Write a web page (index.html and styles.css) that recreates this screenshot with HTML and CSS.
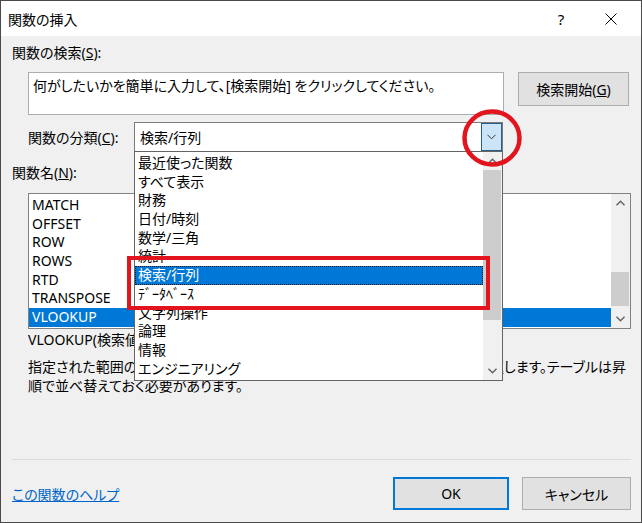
FILE: index.html
```html
<!DOCTYPE html>
<html>
<head>
  <meta charset="UTF-8">
  <title>関数の挿入</title>
  <link rel="stylesheet" href="styles.css">
</head>
<body>
  <div class="window">
    <div class="titlebar">
      <span class="title">関数の挿入</span>
      <span class="help-btn">?</span>
      <span class="close-btn">
        <svg width="12" height="12" viewBox="0 0 12 12"><path d="M0.5 0.5 L11.5 11.5 M11.5 0.5 L0.5 11.5" stroke="#000" stroke-width="1"/></svg>
      </span>
    </div>

    <div class="content">
      <p class="label">関数の検索(<u>S</u>):</p>
      <div class="search-row">
        <div class="search-box">何がしたいかを簡単に入力して、[検索開始] をクリックしてください。</div>
        <button class="btn search-btn">検索開始(<u>G</u>)</button>
      </div>

      <div class="category-row">
        <span class="category-label">関数の分類(<u>C</u>):</span>
        <div class="combo">
          <span>検索/行列</span>
          <span class="combo-arrow">
            <svg width="9" height="6" viewBox="0 0 9 6"><path d="M0.5 0.8 L4.5 4.8 L8.5 0.8" fill="none" stroke="#333" stroke-width="1"/></svg>
          </span>
        </div>
      </div>

      <p class="label name-label">関数名(<u>N</u>):</p>
      <div class="func-list">
        <ul class="items">
          <li>MATCH</li>
          <li>OFFSET</li>
          <li>ROW</li>
          <li>ROWS</li>
          <li>RTD</li>
          <li>TRANSPOSE</li>
          <li class="selected">VLOOKUP</li>
        </ul>
        <div class="scrollbar">
          <svg class="arrow" width="9" height="6" viewBox="0 0 9 6"><path d="M0.5 5.2 L4.5 1.2 L8.5 5.2" fill="none" stroke="#606060" stroke-width="1.4"/></svg>
          <div class="track list-track"><div class="thumb"></div></div>
          <svg class="arrow" width="9" height="6" viewBox="0 0 9 6"><path d="M0.5 0.8 L4.5 4.8 L8.5 0.8" fill="none" stroke="#606060" stroke-width="1.4"/></svg>
        </div>
      </div>

      <p class="syntax">VLOOKUP(検索値,範囲,列番号,検索方法)</p>
      <div class="desc">
        <div class="desc-line">
          <span class="desc-head">指定された範囲の 1 列目で特定の値を検索し、指定した列と同じ行にある値を</span>
          <span>返します。テーブルは昇</span>
        </div>
        <div>順で並べ替えておく必要があります。</div>
      </div>

      <div class="spacer"></div>
      <div class="separator"></div>
      <div class="footer">
        <a href="#" class="help-link">この関数のヘルプ</a>
        <button class="btn ok-btn">OK</button>
        <button class="btn cancel-btn">キャンセル</button>
      </div>
    </div>

    <!-- ドロップダウン（開いた状態） -->
    <div class="dropdown">
      <ul class="items">
        <li>最近使った関数</li>
        <li>すべて表示</li>
        <li>財務</li>
        <li>日付/時刻</li>
        <li>数学/三角</li>
        <li>統計</li>
        <li class="selected">検索/行列</li>
        <li>ﾃﾞｰﾀﾍﾞｰｽ</li>
        <li>文字列操作</li>
        <li>論理</li>
        <li>情報</li>
        <li>エンジニアリング</li>
      </ul>
      <div class="scrollbar">
        <svg class="arrow" width="9" height="6" viewBox="0 0 9 6"><path d="M0.5 5.2 L4.5 1.2 L8.5 5.2" fill="none" stroke="#606060" stroke-width="1.4"/></svg>
        <div class="track drop-track"><div class="thumb"></div></div>
        <svg class="arrow" width="9" height="6" viewBox="0 0 9 6"><path d="M0.5 0.8 L4.5 4.8 L8.5 0.8" fill="none" stroke="#606060" stroke-width="1.4"/></svg>
      </div>
    </div>

    <!-- 注釈（赤丸・赤枠） -->
    <svg class="marks" width="642" height="523" viewBox="0 0 642 523">
      <ellipse cx="492" cy="138" rx="27.5" ry="26.5" fill="none" stroke="#e2151f" stroke-width="4.5"/>
      <rect x="129" y="258" width="359" height="50" fill="none" stroke="#e2151f" stroke-width="4"/>
    </svg>
  </div>
</body>
</html>
```

FILE: styles.css
```css
html, body {
  margin: 0;
  padding: 0;
}

body {
  font-family: "Noto Sans", "Noto Sans CJK JP", sans-serif;
  font-feature-settings: "palt";
  font-size: 14px;
  color: #000;
  background-color: #f0f0f0;
}

.window {
  position: relative;
  width: 642px;
  height: 523px;
  box-sizing: border-box;
  border: 1px solid #4a4a4a;
  background-color: #f0f0f0;
  display: flex;
  flex-direction: column;
  overflow: hidden;
}

.titlebar {
  height: 35px;
  background-color: #fff;
  display: flex;
  align-items: center;
  padding-left: 7px;
}

.title {
  flex: 1;
}

.help-btn {
  width: 46px;
  text-align: center;
  font-size: 15px;
  margin-right: 4px;
}

.close-btn {
  width: 46px;
  margin-right: 7px;
  display: flex;
  justify-content: center;
}

.content {
  flex: 1;
  display: flex;
  flex-direction: column;
  padding: 0 10px 0 11px;
}

.label {
  margin: 7px 0 0 0;
  line-height: 20px;
}

.search-row {
  display: flex;
  align-items: flex-start;
  margin-top: 9px;
}

.search-box {
  margin-left: 16px;
  width: 476px;
  height: 43px;
  box-sizing: border-box;
  border: 1px solid #adadad;
  background-color: #fff;
  padding: 3px 4px;
  line-height: 20px;
}

.btn {
  font-family: inherit;
  font-feature-settings: "palt";
  font-size: 14px;
  color: #000;
  background-color: #e1e1e1;
  border: 1px solid #adadad;
  padding: 0;
  box-sizing: border-box;
}

.search-btn {
  margin-left: 14px;
  width: 111px;
  height: 34px;
}

.category-row {
  display: flex;
  align-items: center;
  margin-top: 7px;
  margin-left: 16px;
}

.category-label {
  width: 106px;
}

.combo {
  width: 369px;
  height: 30px;
  box-sizing: border-box;
  border: 1px solid #7a7a7a;
  background-color: #fff;
  display: flex;
  align-items: center;
  padding-left: 5px;
}

.combo span:first-child {
  flex: 1;
}

.combo-arrow {
  width: 21px;
  height: 28px;
  box-sizing: border-box;
  border: 1px solid #2a5f8c;
  background-color: #cce4f7;
  display: flex;
  align-items: center;
  justify-content: center;
}

.name-label {
  margin-top: 11px;
}

.func-list {
  margin: 10px 0 0 16px;
  width: 603px;
  height: 136px;
  box-sizing: border-box;
  border: 1px solid #828282;
  background-color: #fff;
  display: flex;
}

.items {
  list-style: none;
  margin: 0;
  padding: 2px 0 0 0;
  flex: 1;
}

.items li {
  line-height: 18.7px;
  height: 18.7px;
  padding-left: 3px;
}

.items li.selected {
  background-color: #0078d7;
  color: #fff;
}

.scrollbar {
  width: 19px;
  background-color: #f0f0f0;
  display: flex;
  flex-direction: column;
  align-items: center;
}

.scrollbar .arrow {
  margin: 6px 0;
}

.track {
  flex: 1;
  width: 100%;
  position: relative;
}

.thumb {
  position: absolute;
  left: 0;
  right: 1px;
  background-color: #cdcdcd;
}

.list-track .thumb {
  top: 60px;
  height: 34px;
}

.syntax {
  margin: 1px 0 0 16px;
  line-height: 20px;
}

.desc {
  margin: 7px 0 0 16px;
  line-height: 19px;
}

.desc-line {
  display: flex;
  padding-right: 5px;
}

.desc-head {
  flex: 1;
  min-width: 0;
  overflow: hidden;
  white-space: nowrap;
}

.spacer {
  flex: 1;
}

.separator {
  height: 1px;
  background-color: #dcdcdc;
}

.footer {
  display: flex;
  align-items: center;
  margin-top: 17px;
  margin-bottom: 12px;
}

.help-link {
  flex: 1;
  color: #0066cc;
  text-decoration: underline;
}

.ok-btn {
  width: 116px;
  height: 33px;
  border: 2px solid #0078d7;
  margin-right: 13px;
}

.cancel-btn {
  width: 109px;
  height: 33px;
}

/* 開いたドロップダウン */
.dropdown {
  position: absolute;
  left: 133px;
  top: 150px;
  width: 369px;
  height: 230px;
  box-sizing: border-box;
  border: 1px solid #646464;
  background-color: #fff;
  display: flex;
}

.dropdown .items {
  padding-top: 2px;
}

.dropdown .items li {
  padding-left: 3px;
}

.dropdown .items li.selected {
  outline: 1px dotted #1a1a1a;
  outline-offset: -1px;
}

.drop-track .thumb {
  top: 0;
  height: 150px;
}

.marks {
  position: absolute;
  left: -1px;
  top: -1px;
  pointer-events: none;
}
```
